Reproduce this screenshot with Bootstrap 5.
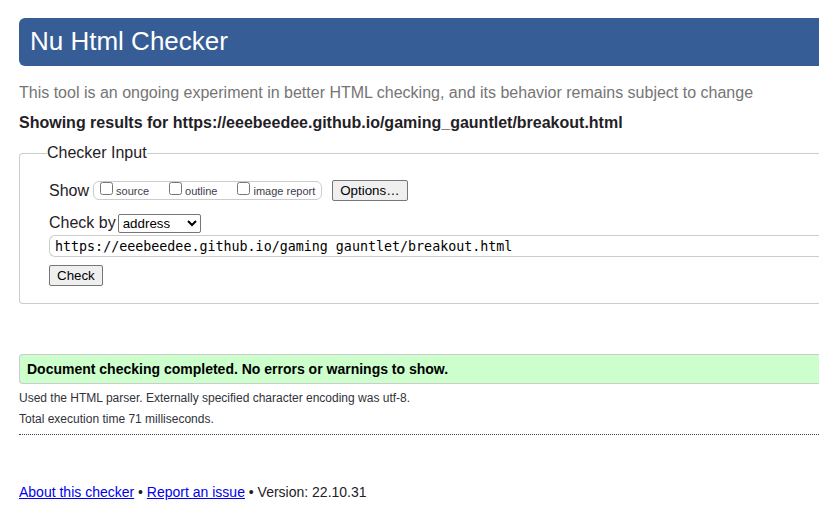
<!DOCTYPE html>
<html lang="en">
<head>
<meta charset="utf-8">
<meta name="viewport" content="width=device-width, initial-scale=1">
<title>Nu Html Checker</title>
<link href="https://cdn.jsdelivr.net/npm/bootstrap@5.3.0/dist/css/bootstrap.min.css" rel="stylesheet">
<style>
  body { font-family: "Liberation Sans", Arial, sans-serif; font-size: 16px; line-height: 20px; color: #1f2126; background: #fff; }
  .page { padding: 18px 0 0 19px; }
  .banner { background: #365d95; color: #fff; border-radius: 6px 0 0 6px; padding: 8px 11px 10px; font-size: 26px; line-height: 30px; font-weight: 400; }
  .tagline { color: #757575; margin-top: 17px; }
  .results-title { font-size: 16px; line-height: 20px; font-weight: 700; margin-top: 10px; }
  .panel { border: 1px solid #ccc; border-right: 0; border-radius: 4px 0 0 4px; padding: 17px 0 17px 29px; margin-top: 10px; }
  .panel legend { float: none; width: auto; margin: 0 0 0 -2px; font-size: 16px; line-height: 20px; }
  .options { border: 1px solid #ccc; border-radius: 6px; padding: 0 6px; margin: 0 10px 0 4px; height: 19px; gap: 20px; font-size: 11px; line-height: 17px; color: #3c3c4c; }
  .options input { width: 13px; height: 13px; margin: 0 3px 4px 0; }
  .options label { padding-top: 1px; }
  .native { font-family: "Liberation Sans", Arial, sans-serif; font-size: revert; line-height: normal; color: #000; border: 1px solid #767676; border-radius: 2px; }
  button.native { background: #efefef; padding: 2px 7px; height: 21px; line-height: 15px; }
  select.native { background: #fff; width: 83px; height: 19px; margin-left: 2px; }
  .address { font-family: "DejaVu Sans Mono", monospace; font-size: revert; line-height: 16px; color: #000; border: 1px solid #ccc; border-right: 0; border-radius: 6px 0 0 6px; height: 22px; padding: 2px 5px; margin-top: 2px; }
  .success { background: #cfc; border: 1px solid #ccc; border-right: 0; border-radius: 4px 0 0 4px; color: #000; font-size: 14px; line-height: 20px; padding: 4px 7px; margin-top: 50px; }
  .details { font-size: 12px; line-height: 21px; color: #30323a; border-bottom: 1px dotted #444; padding: 4px 0; }
  .about { font-size: 14px; line-height: 20px; margin-top: 47px; }
  .about a { color: #00e; }
</style>
<script src="https://cdn.jsdelivr.net/npm/bootstrap@5.3.0/dist/js/bootstrap.bundle.min.js" defer></script>
</head>
<body>
<div class="page">
  <header><h1 class="banner mb-0">Nu Html Checker</h1></header>
  <main>
    <p class="tagline mb-0">This tool is an ongoing experiment in better HTML checking, and its behavior remains subject to change</p>
    <h2 class="results-title mb-0">Showing results for https://eeebeedee.github.io/gaming_gauntlet/breakout.html</h2>
    <form>
      <fieldset class="panel">
        <legend>Checker Input</legend>
        <div class="d-flex align-items-center">
          <span>Show</span>
          <div class="options d-flex align-items-center">
            <div class="d-flex align-items-center"><input type="checkbox" id="source"><label for="source">source</label></div>
            <div class="d-flex align-items-center"><input type="checkbox" id="outline"><label for="outline">outline</label></div>
            <div class="d-flex align-items-center"><input type="checkbox" id="images"><label for="images">image report</label></div>
          </div>
          <button type="button" class="native">Options…</button>
        </div>
        <div class="d-flex align-items-center mt-2 pt-1">
          <label for="method">Check by</label>
          <select id="method" class="native"><option>address</option><option>file upload</option><option>text input</option></select>
        </div>
        <input type="url" class="address d-block w-100" aria-label="Address" value="https://eeebeedee.github.io/gaming_gauntlet/breakout.html">
        <button type="button" class="native d-block mt-2">Check</button>
      </fieldset>
    </form>
    <section>
      <p class="success fw-bold mb-0">Document checking completed. No errors or warnings to show.</p>
      <div class="details">
        <p class="mb-0">Used the HTML parser. Externally specified character encoding was utf-8.</p>
        <p class="mb-0">Total execution time 71 milliseconds.</p>
      </div>
    </section>
  </main>
  <footer class="about"><a href="#about">About this checker</a> • <a href="#issue">Report an issue</a> • Version: 22.10.31</footer>
</div>
</body>
</html>
